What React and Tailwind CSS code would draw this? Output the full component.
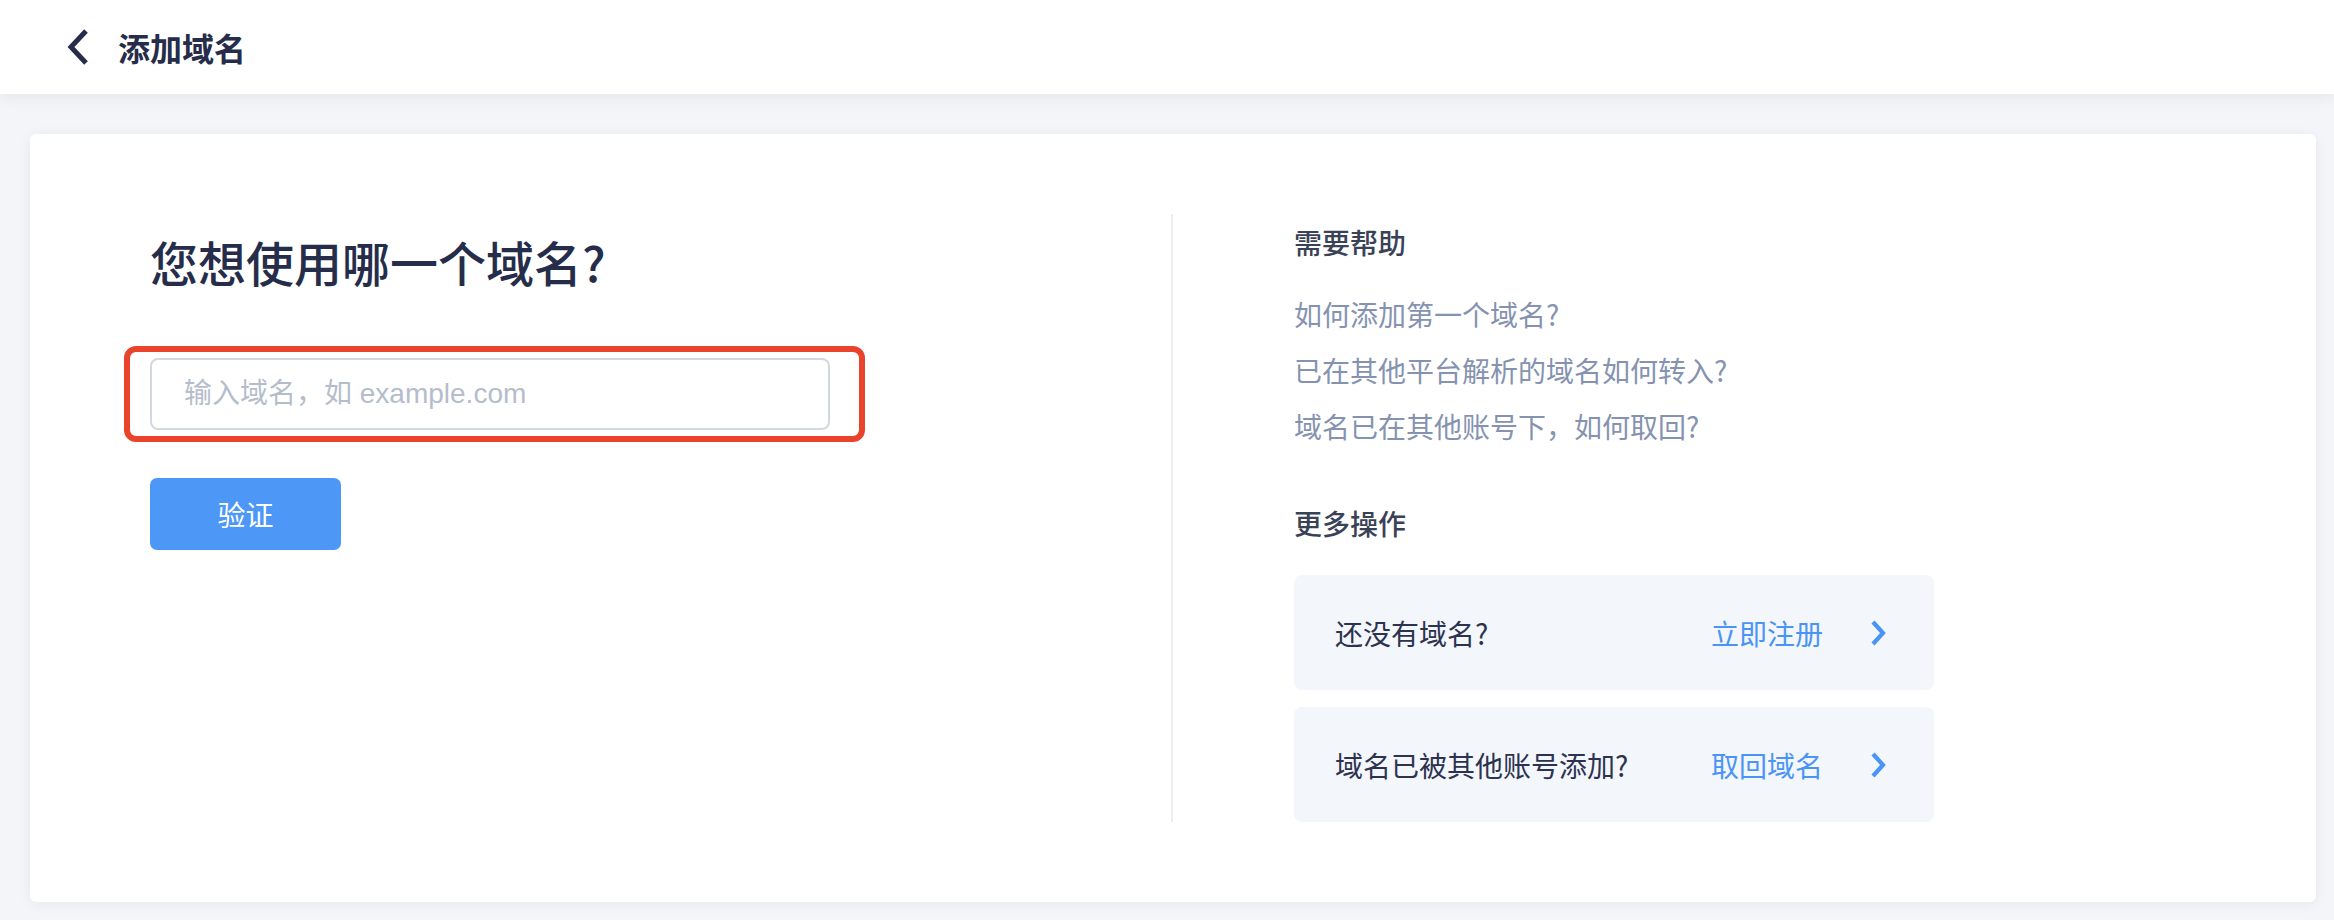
import React from "react";

const font = {
    fontFamily: '"Noto Sans CJK SC", "Liberation Sans", sans-serif',
};

const inputFont = {
    fontFamily: '"Liberation Sans", "Noto Sans CJK SC", sans-serif',
};

const BackIcon = () => (
    <svg width="24" height="38" viewBox="0 0 24 38" fill="none">
        <polyline
            points="20,3 5,19 20,35"
            stroke="#262d4a"
            strokeWidth="5"
            strokeLinejoin="miter"
        />
    </svg>
);

const ArrowIcon = () => (
    <svg width="16" height="26" viewBox="0 0 16 26" fill="none">
        <polyline
            points="3,2 13,13 3,24"
            stroke="#4a94f5"
            strokeWidth="4.2"
            strokeLinejoin="miter"
        />
    </svg>
);

const helpLinks = [
    "如何添加第一个域名?",
    "已在其他平台解析的域名如何转入?",
    "域名已在其他账号下，如何取回?",
];

const actions = [
    { label: "还没有域名?", link: "立即注册" },
    { label: "域名已被其他账号添加?", link: "取回域名" },
];

const App = () => {
    return (
        <div className="min-h-[920px] bg-[#f4f5f8]" style={font}>
            {/* Header */}
            <div className="h-[94px] bg-white flex items-center pl-[66px] shadow-[0_4px_14px_rgba(30,40,70,0.07)] relative z-10">
                <BackIcon />
                <h2 className="ml-[28px] text-[32px] leading-[40px] font-semibold text-[#262d4a]">
                    添加域名
                </h2>
            </div>

            {/* Card */}
            <div className="pt-[40px] pb-[18px] pl-[30px] pr-[18px]">
                <div className="bg-white rounded-[6px] shadow-[0_2px_14px_rgba(30,40,70,0.06)] flex py-[80px] pl-[120px]">
                    {/* Left */}
                    <div className="w-[1021px] pt-[15px]">
                        <h1 className="text-[48px] leading-[64px] font-medium text-[#252d4a]">
                            您想使用哪一个域名?
                        </h1>
                        <div className="relative w-[680px] mt-[65px]">
                            <input
                                className="w-full h-[72px] border-2 border-[#d3d7e0] rounded-[8px] px-[32px] text-[28px] text-[#252d4a] placeholder:text-[#b5bdcc] outline-none"
                                placeholder="输入域名，如 example.com"
                                style={inputFont}
                            />
                            <div className="absolute -left-[26px] -top-[12px] -right-[35px] -bottom-[12px] border-[6px] border-[#e9432b] rounded-[12px] pointer-events-none" />
                        </div>
                        <button className="mt-[48px] w-[191px] h-[72px] rounded-[7px] bg-[#4d97f7] text-white text-[28px]">
                            验证
                        </button>
                    </div>

                    {/* Right */}
                    <div className="border-l-2 border-[#eceef2] pl-[121px] pt-[8px]">
                        <div className="text-[28px] leading-[40px] font-medium text-[#3a4258]">
                            需要帮助
                        </div>
                        <div className="mt-[32px] flex flex-col gap-[16px]">
                            {helpLinks.map((text) => (
                                <a
                                    key={text}
                                    className="text-[28px] leading-[40px] text-[#8593b0]"
                                >
                                    {text}
                                </a>
                            ))}
                        </div>
                        <div className="mt-[57px] text-[28px] leading-[40px] font-medium text-[#3a4258]">
                            更多操作
                        </div>
                        <div className="mt-[32px] flex flex-col gap-[17px]">
                            {actions.map((item) => (
                                <div
                                    key={item.label}
                                    className="w-[640px] h-[115px] rounded-[8px] bg-[#f3f6fb] flex items-center pl-[41px] pr-[48px]"
                                >
                                    <span className="flex-1 text-[28px] text-[#2c3350]">
                                        {item.label}
                                    </span>
                                    <span className="text-[28px] text-[#4a94f5]">
                                        {item.link}
                                    </span>
                                    <span className="ml-[47px] flex">
                                        <ArrowIcon />
                                    </span>
                                </div>
                            ))}
                        </div>
                    </div>
                </div>
            </div>
        </div>
    );
};

export default App;
